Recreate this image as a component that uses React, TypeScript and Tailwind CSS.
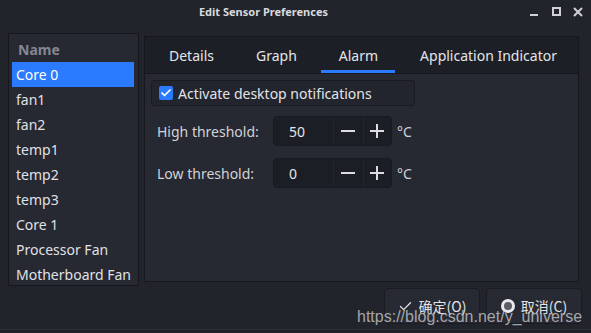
import { Check } from 'lucide-react'

const sensors = ['Core 0', 'fan1', 'fan2', 'temp1', 'temp2', 'temp3', 'Core 1', 'Processor Fan', 'Motherboard Fan']
const tabs = ['Details', 'Graph', 'Alarm', 'Application Indicator']

function SpinRow({ label, value }: { label: string; value: string }) {
  return (
    <div className="flex items-center h-[30px]">
      <div className="w-[116px] text-[14px] text-[#d2d3d6]">{label}</div>
      <div className="flex h-[30px] w-[119px] rounded-[4px] border border-[#181a20] bg-[#1c1e25]">
        <div className="flex w-[60px] items-center pl-[15px] text-[14px] text-[#e4e5e7]">{value}</div>
        <div className="flex w-[30px] items-center justify-center border-l border-[#23252c]">
          <div className="h-[2px] w-[14px] bg-[#dcdde0]" />
        </div>
        <div className="relative flex w-[29px] items-center justify-center border-l border-[#23252c]">
          <div className="h-[2px] w-[14px] bg-[#dcdde0]" />
          <div className="absolute h-[14px] w-[2px] bg-[#dcdde0]" />
        </div>
      </div>
      <div className="ml-[5px] text-[14px] text-[#d2d3d6]">°C</div>
    </div>
  )
}

export default function App() {
  return (
    <div className="relative h-[333px] w-[591px] overflow-hidden bg-[#22242c] font-['Noto_Sans',sans-serif] text-[#e2e3e6]">
      {/* title bar */}
      <div className="relative flex h-[25px] items-center justify-center pr-[64px]">
        <span className="text-[11px] font-bold text-[#d8d9dc]">Edit Sensor Preferences</span>
        <div className="absolute left-[530px] top-[7px] flex h-[9px] items-start">
          <div className="mt-[7px] h-[2px] w-[8px] bg-[#d0d1d4]" />
          <div className="ml-[14px] h-[9px] w-[9px] border-2 border-[#d0d1d4]" />
          <svg className="ml-[12px]" width="10" height="10" viewBox="0 0 10 10">
            <path d="M1 1 L9 9 M9 1 L1 9" stroke="#d0d1d4" strokeWidth="2" />
          </svg>
        </div>
      </div>

      <div className="flex pl-[8px] pt-[8px]">
        {/* sensor list */}
        <div className="h-[253px] w-[131px] border border-[#16171c] bg-[#262832] pl-[3px] pr-[4px]">
          <div className="flex h-[28px] items-center pl-[6px] pt-[2px] text-[14px] font-bold text-[#858790]">Name</div>
          {sensors.map((s, i) => (
            <div
              key={s}
              className={
                i === 0
                  ? 'flex h-[25px] items-center bg-[#2a7bff] pl-[4px] text-[14px] text-white'
                  : 'flex h-[25px] items-center pl-[4px] text-[14px] text-[#e0e1e4]'
              }
            >
              {s}
            </div>
          ))}
        </div>

        {/* notebook */}
        <div className="ml-[5px] mt-[3px] flex h-[246px] w-[435px] flex-col border border-[#17181d] bg-[#262832]">
          <div className="flex h-[37px] items-stretch border-b border-[#17181d] bg-[#1d1f26] pl-[3px]">
            {tabs.map((t) => (
              <div key={t} className="relative flex items-center px-[21px] pt-[1px] text-[14px] text-[#e4e5e8]">
                {t}
                {t === 'Alarm' && <div className="absolute bottom-0 left-[3px] right-[4px] h-[3px] bg-[#2a7bff]" />}
              </div>
            ))}
          </div>
          <div className="flex flex-col pl-[6px] pt-[6px]">
            <div className="flex h-[26px] w-[264px] items-center rounded-[3px] border border-[#1a1b21] bg-[#23252e] pl-[7px]">
              <div className="flex h-[14px] w-[14px] items-center justify-center rounded-[2px] bg-[#2a7bff]">
                <Check size={12} strokeWidth={3.5} color="#ffffff" />
              </div>
              <span className="ml-[5px] text-[14px] text-[#e2e3e6]">Activate desktop notifications</span>
            </div>
            <div className="mt-[10px] flex flex-col gap-[12px] pl-[6px]">
              <SpinRow label="High threshold:" value="50" />
              <SpinRow label="Low threshold:" value="0" />
            </div>
          </div>
        </div>
      </div>

      {/* buttons */}
      <div className="mt-[2px] flex justify-end gap-[6px] pr-[9px]">
        <div className="flex h-[36px] w-[96px] items-center justify-center gap-[6px] rounded-[4px] border border-[#1a1b21] bg-[#272a33] text-[14px] text-[#e2e3e6]">
          <Check size={15} strokeWidth={2} color="#e2e3e6" />
          <span className="font-['Noto_Sans_CJK_SC',sans-serif]">确定(O)</span>
        </div>
        <div className="flex h-[36px] w-[96px] items-center justify-center gap-[6px] rounded-[4px] border border-[#1a1b21] bg-[#272a33] text-[14px] text-[#e2e3e6]">
          <div className="flex h-[14px] w-[14px] items-center justify-center rounded-full border-[3px] border-[#e8e9ec] bg-[#5a5d66]" />
          <span className="font-['Noto_Sans_CJK_SC',sans-serif]">取消(C)</span>
        </div>
      </div>

      <div className="absolute bottom-0 left-0 h-[4px] w-full border-t border-[#2d2f38] bg-[#1f2128]" />

      {/* watermark */}
      <div className="absolute left-[357px] top-[305px] font-['Liberation_Sans',sans-serif] text-[16px] text-[#c8c8cc]/80">
        https://blog.csdn.net/y_universe
      </div>
    </div>
  )
}
